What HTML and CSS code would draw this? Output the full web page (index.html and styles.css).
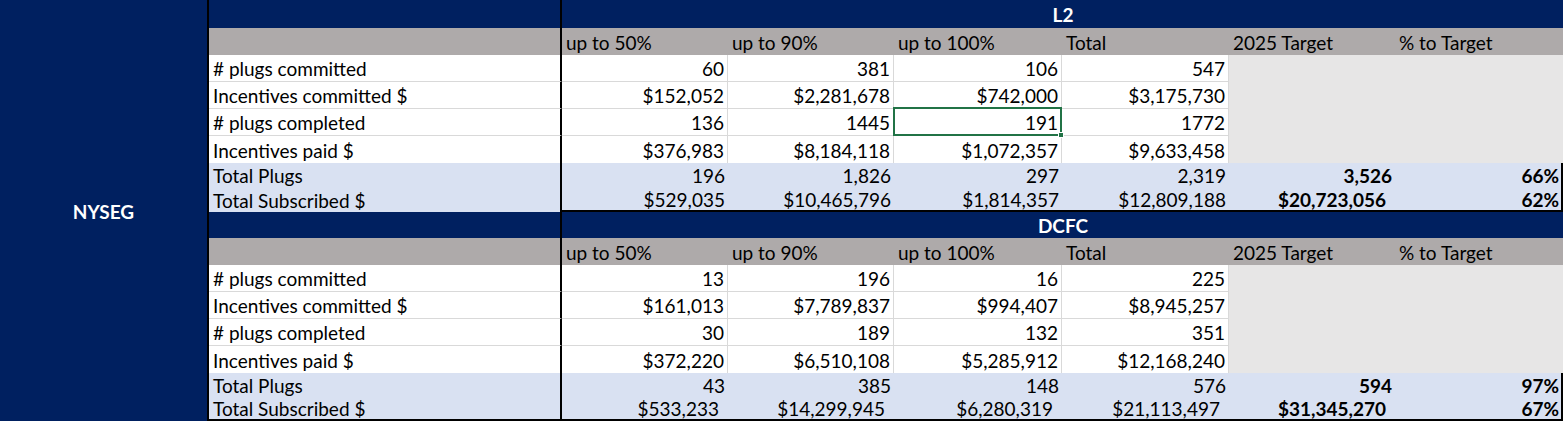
FILE: index.html
```html
<!DOCTYPE html>
<html lang="en">
<head>
<meta charset="utf-8">
<title>NYSEG EV Make-Ready</title>
<link rel="stylesheet" href="styles.css">
</head>
<body>
<div class="sheet">
  <div class="region">NYSEG</div>

  <!-- L2 section -->
  <div class="c lbl navy"></div>
  <div class="c title navy">L2</div>

  <div class="c lbl grey"></div>
  <div class="c hd">up to 50%</div>
  <div class="c hd">up to 90%</div>
  <div class="c hd">up to 100%</div>
  <div class="c hd">Total</div>
  <div class="c hd">2025 Target</div>
  <div class="c hd">% to Target</div>

  <div class="c lbl line">#&nbsp;plugs committed</div>
  <div class="c num line">60</div>
  <div class="c num line">381</div>
  <div class="c num line">106</div>
  <div class="c num line">547</div>
  <div class="c fill"></div>
  <div class="c fill"></div>

  <div class="c lbl line">Incentives committed $</div>
  <div class="c num line">$152,052</div>
  <div class="c num line">$2,281,678</div>
  <div class="c num line">$742,000</div>
  <div class="c num line">$3,175,730</div>
  <div class="c fill"></div>
  <div class="c fill"></div>

  <div class="c lbl line">#&nbsp;plugs completed</div>
  <div class="c num line">136</div>
  <div class="c num line">1445</div>
  <div class="c num line sel">191<span class="handle"></span></div>
  <div class="c num line">1772</div>
  <div class="c fill"></div>
  <div class="c fill"></div>

  <div class="c lbl">Incentives paid $</div>
  <div class="c num">$376,983</div>
  <div class="c num">$8,184,118</div>
  <div class="c num">$1,072,357</div>
  <div class="c num">$9,633,458</div>
  <div class="c fill"></div>
  <div class="c fill"></div>

  <div class="c lbl tot">Total Plugs</div>
  <div class="c num tot">196</div>
  <div class="c num tot">1,826</div>
  <div class="c num tot">297</div>
  <div class="c num tot">2,319</div>
  <div class="c num tot b">3,526</div>
  <div class="c num tot b edge">66%</div>

  <div class="c lbl tot">Total Subscribed $</div>
  <div class="c num tot end">$529,035</div>
  <div class="c num tot end">$10,465,796</div>
  <div class="c num tot end">$1,814,357</div>
  <div class="c num tot end">$12,809,188</div>
  <div class="c num tot end b acct">$20,723,056</div>
  <div class="c num tot end b edge">62%</div>

  <!-- DCFC section -->
  <div class="c lbl navy"></div>
  <div class="c title navy">DCFC</div>

  <div class="c lbl grey"></div>
  <div class="c hd">up to 50%</div>
  <div class="c hd">up to 90%</div>
  <div class="c hd">up to 100%</div>
  <div class="c hd">Total</div>
  <div class="c hd">2025 Target</div>
  <div class="c hd">% to Target</div>

  <div class="c lbl line">#&nbsp;plugs committed</div>
  <div class="c num line">13</div>
  <div class="c num line">196</div>
  <div class="c num line">16</div>
  <div class="c num line">225</div>
  <div class="c fill"></div>
  <div class="c fill"></div>

  <div class="c lbl line">Incentives committed $</div>
  <div class="c num line">$161,013</div>
  <div class="c num line">$7,789,837</div>
  <div class="c num line">$994,407</div>
  <div class="c num line">$8,945,257</div>
  <div class="c fill"></div>
  <div class="c fill"></div>

  <div class="c lbl line">#&nbsp;plugs completed</div>
  <div class="c num line">30</div>
  <div class="c num line">189</div>
  <div class="c num line">132</div>
  <div class="c num line">351</div>
  <div class="c fill"></div>
  <div class="c fill"></div>

  <div class="c lbl">Incentives paid $</div>
  <div class="c num">$372,220</div>
  <div class="c num">$6,510,108</div>
  <div class="c num">$5,285,912</div>
  <div class="c num">$12,168,240</div>
  <div class="c fill"></div>
  <div class="c fill"></div>

  <div class="c lbl tot">Total Plugs</div>
  <div class="c num tot">43</div>
  <div class="c num tot">385</div>
  <div class="c num tot">148</div>
  <div class="c num tot">576</div>
  <div class="c num tot b">594</div>
  <div class="c num tot b edge">97%</div>

  <div class="c lbl tot last">Total Subscribed $</div>
  <div class="c num tot last acct2">$533,233</div>
  <div class="c num tot last acct2">$14,299,945</div>
  <div class="c num tot last acct2">$6,280,319</div>
  <div class="c num tot last acct2">$21,113,497</div>
  <div class="c num tot last b acct">$31,345,270</div>
  <div class="c num tot last b edge">67%</div>
</div>
</body>
</html>
```

FILE: styles.css
```css
* {
  box-sizing: border-box;
}

html,
body {
  margin: 0;
  padding: 0;
  background: #ffffff;
}

body {
  font-family: Lato, "Liberation Sans", sans-serif;
  font-size: 19px;
  color: #000000;
}

.sheet {
  display: grid;
  width: 1563px;
  height: 421px;
  overflow: hidden;
  grid-template-columns: 209px 353px 166px 166px 168px 167px 166px 168px;
  grid-template-rows: 28px 27px 27px 27px 27px 27px 24px 25px 26px 27px 27px 27px 27px 27px 24px 24px;
}

.region {
  grid-column: 1;
  grid-row: 1 / -1;
  background: #002060;
  border-right: 2px solid #000000;
  color: #ffffff;
  font-weight: 700;
  display: flex;
  align-items: center;
  justify-content: center;
  padding-top: 1px;
}

.c {
  display: flex;
  align-items: center;
  padding: 1px 3px 0 4px;
  white-space: nowrap;
  line-height: 1;
  min-width: 0;
}

.lbl {
  border-right: 2px solid #000000;
}

.navy {
  background: #002060;
}

.title {
  grid-column: span 6;
  justify-content: center;
  color: #ffffff;
  font-weight: 700;
}

.grey,
.hd {
  background: #aeaaaa;
}

.num {
  justify-content: flex-end;
}

.line {
  border-bottom: 1px solid #d9d9d9;
}

.num:not(.tot) {
  border-right: 1px solid #d9d9d9;
}

.fill {
  background: #e7e6e6;
}

.tot {
  background: #d9e1f2;
}

.b {
  font-weight: 700;
}

.edge {
  border-right: 2px solid #000000;
  padding-right: 2px;
}

.end {
  border-bottom: 2px solid #000000;
}

.last {
  border-bottom: 2px solid #000000;
}

.acct {
  padding-right: 9px;
}

.acct2 {
  padding-right: 9px;
}

.sel {
  position: relative;
}

.sel::after {
  content: "";
  position: absolute;
  left: -1px;
  top: -2px;
  right: -1px;
  bottom: -1px;
  border: 2px solid #217346;
}

.handle {
  position: absolute;
  right: -3px;
  bottom: -3px;
  width: 6px;
  height: 6px;
  background: #217346;
  border: 1px solid #ffffff;
  z-index: 1;
}
```
